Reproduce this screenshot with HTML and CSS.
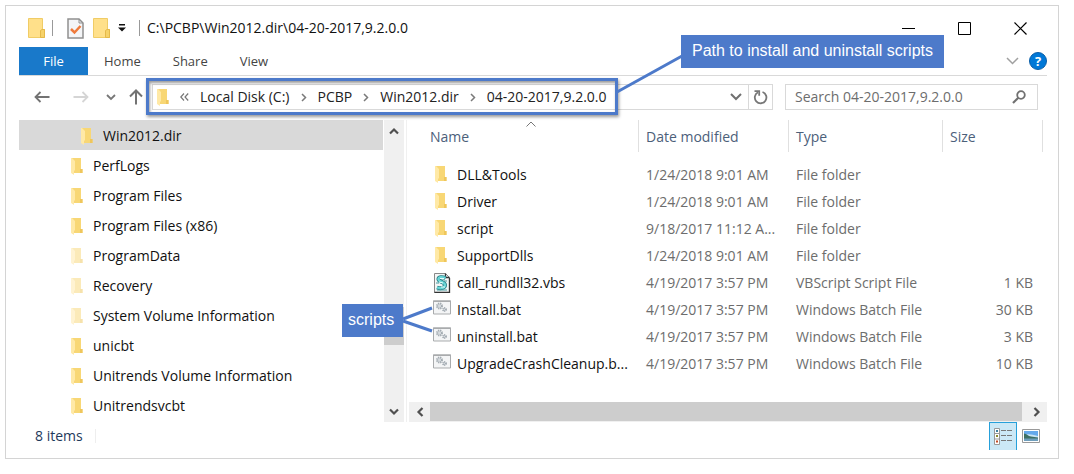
FILE: index.html
```html
<!DOCTYPE html>
<html lang="en">
<head>
  <meta charset="UTF-8">
  <meta name="viewport" content="width=device-width, initial-scale=1">
  <title>C:\PCBP\Win2012.dir\04-20-2017,9.2.0.0</title>
  <link rel="stylesheet" href="styles.css">
</head>
<body>

<!-- Shared icons -->
<svg class="sprite" aria-hidden="true">
  <symbol id="folder" viewBox="0 0 12 17">
    <path d="M1 0h9v11h1.500v4H1z" fill="#f8d775"/>
    <path d="M9 11h2.500v4H9z" fill="#efc65c"/>
    <path d="M0 0h1l3 3v9l-1 1v4l-3-2z" fill="#ffe9a6"/>
  </symbol>
  <symbol id="folder-big" viewBox="0 0 18 21">
    <path d="M.5.500h14v11h2v8H.5z" fill="#ffe08a" stroke="#f0cc66"/>
    <path d="M12.500 19.500v-7l1.500-1h2.500v8z" fill="#f6d269" stroke="#e5b94a"/>
  </symbol>
  <symbol id="chevron" viewBox="0 0 6 9">
    <path d="M1 1l3.500 3.500L1 8" fill="none" stroke="#7a7a7a" stroke-width="1.500"/>
  </symbol>
  <symbol id="batch" viewBox="0 0 18 15">
    <path d="M.5 1h17v13H.5z" fill="#f4f5f6" stroke="#a9abad"/>
    <path d="M0 .5h18v1.500H0z" fill="#a9abad"/>
    <circle cx="6.500" cy="6" r="2.500" fill="#d5dade" stroke="#a3abb1" stroke-width="2" stroke-dasharray="1.200 .8"/>
    <circle cx="11.500" cy="9.500" r="1.600" fill="#d5dade" stroke="#969fa7" stroke-width="1.500" stroke-dasharray="1 .6"/>
  </symbol>
</svg>

<main class="window">

  <header class="titlebar">
    <svg class="icon-big" aria-hidden="true"><use href="#folder-big"/></svg>
    <span class="sep sep-first"></span>
    <button class="plain" aria-label="Properties">
      <svg width="18" height="21" viewBox="0 0 18 21">
        <path d="M1 1h11l4 4v15H1z" fill="#f4f5f7" stroke="#909090" stroke-width="1.500"/>
        <path d="M12 1v4h4" fill="none" stroke="#909090"/>
        <path d="M4 11l3.500 3.500L13.500 8" fill="none" stroke="#ee7a3c" stroke-width="2.500"/>
      </svg>
    </button>
    <button class="plain new-folder" aria-label="New folder"><svg class="icon-big"><use href="#folder-big"/></svg></button>
    <button class="plain customize" aria-label="Customize Quick Access Toolbar">
      <svg width="8" height="8" viewBox="0 0 8 8"><path d="M1 0h6v1.500H1zM0 3.500h8L4 7.500z" fill="#111"/></svg>
    </button>
    <span class="sep sep-last"></span>
    <h1 class="title">C:\PCBP\Win2012.dir\04-20-2017,9.2.0.0</h1>
    <div class="controls">
      <button class="plain" aria-label="Minimize"><svg width="13" height="13"><path d="M0 6.500h13" stroke="#000"/></svg></button>
      <button class="plain" aria-label="Maximize"><svg width="13" height="13"><path d="M.5.500h12v12H.5z" fill="none" stroke="#000"/></svg></button>
      <button class="plain" aria-label="Close"><svg width="13" height="13"><path d="M.5.500l12 12M12.500.500l-12 12" stroke="#000" stroke-width="1.200"/></svg></button>
    </div>
  </header>

  <div class="ribbon">
    <button class="tab tab-file">File</button>
    <button class="tab">Home</button>
    <button class="tab">Share</button>
    <button class="tab">View</button>
    <div class="ribbon-end">
      <button class="plain" aria-label="Expand the Ribbon"><svg width="13" height="8"><path d="M1 1l5.500 5.500L12 1" fill="none" stroke="#a0a0a0" stroke-width="1.500"/></svg></button>
      <button class="help" aria-label="Help">?</button>
    </div>
  </div>

  <div class="addressbar">
    <div class="arrows">
      <button class="plain" aria-label="Back"><svg width="16" height="12"><path d="M15.500 6H1.500M6.500 1l-5 5 5 5" fill="none" stroke="#737373" stroke-width="1.800"/></svg></button>
      <button class="plain forward" aria-label="Forward"><svg width="16" height="12"><path d="M.5 6h14M9.500 1l5 5-5 5" fill="none" stroke="#d5d5d5" stroke-width="1.800"/></svg></button>
      <button class="plain recent" aria-label="Recent locations"><svg width="10" height="7"><path d="M1 1l4 4 4-4" fill="none" stroke="#777" stroke-width="1.800"/></svg></button>
      <button class="plain" aria-label="Up"><svg width="14" height="16"><path d="M7 15.500V1.500M1 7.500l6-6 6 6" fill="none" stroke="#737373" stroke-width="2"/></svg></button>
    </div>
    <div class="address">
      <nav class="crumbs" aria-label="Address">
        <svg class="icon-folder" aria-hidden="true"><use href="#folder"/></svg>
        <svg class="more" width="9" height="8" aria-hidden="true"><path d="M4 .5L.8 4 4 7.500M8.200.500L5 4l3.200 3.500" fill="none" stroke="#777" stroke-width="1.200"/></svg>
        <a href="#c">Local Disk (C:)</a>
        <svg class="chev" aria-hidden="true"><use href="#chevron"/></svg>
        <a href="#pcbp">PCBP</a>
        <svg class="chev" aria-hidden="true"><use href="#chevron"/></svg>
        <a href="#win2012">Win2012.dir</a>
        <svg class="chev" aria-hidden="true"><use href="#chevron"/></svg>
        <a href="#current">04-20-2017,9.2.0.0</a>
      </nav>
      <button class="plain history" aria-label="Previous locations"><svg width="12" height="8"><path d="M1 1l5 5 5-5" fill="none" stroke="#707070" stroke-width="2"/></svg></button>
      <button class="plain refresh" aria-label="Refresh">
        <svg width="15" height="15" viewBox="0 0 15 15"><path d="M9.500 2a5.800 5.800 0 1 1-4.500.300" fill="none" stroke="#777" stroke-width="1.800"/><path d="M1.500 1.200h4.700v4.500" fill="none" stroke="#777" stroke-width="1.800"/></svg>
      </button>
    </div>
    <div class="search">
      <input type="text" aria-label="Search 04-20-2017,9.2.0.0" placeholder="Search 04-20-2017,9.2.0.0">
      <svg width="14" height="14" aria-hidden="true"><circle cx="9" cy="5" r="3.800" fill="none" stroke="#707070" stroke-width="1.800"/><path d="M6.300 7.700L1 13" stroke="#707070" stroke-width="2.200"/></svg>
    </div>
  </div>

  <div class="panes">
    <ul class="tree">
      <li><a class="selected" href="#win2012"><svg class="icon-folder"><use href="#folder"/></svg>Win2012.dir</a></li>
      <li><a href="#perflogs"><svg class="icon-folder"><use href="#folder"/></svg>PerfLogs</a></li>
      <li><a href="#program-files"><svg class="icon-folder"><use href="#folder"/></svg>Program Files</a></li>
      <li><a href="#program-files-x86"><svg class="icon-folder"><use href="#folder"/></svg>Program Files (x86)</a></li>
      <li><a class="hidden-item" href="#programdata"><svg class="icon-folder"><use href="#folder"/></svg>ProgramData</a></li>
      <li><a class="hidden-item" href="#recovery"><svg class="icon-folder"><use href="#folder"/></svg>Recovery</a></li>
      <li><a class="hidden-item" href="#svi"><svg class="icon-folder"><use href="#folder"/></svg>System Volume Information</a></li>
      <li><a href="#unicbt"><svg class="icon-folder"><use href="#folder"/></svg>unicbt</a></li>
      <li><a href="#uvi"><svg class="icon-folder"><use href="#folder"/></svg>Unitrends Volume Information</a></li>
      <li><a href="#unitrendsvcbt"><svg class="icon-folder"><use href="#folder"/></svg>Unitrendsvcbt</a></li>
    </ul>

    <div class="vscroll">
      <button class="plain" aria-label="Scroll up"><svg width="10" height="8"><path d="M1 6.500l4-4 4 4" fill="none" stroke="#505050" stroke-width="2.200"/></svg></button>
      <div class="vthumb"></div>
      <button class="plain" aria-label="Scroll down"><svg width="10" height="8"><path d="M1 1.500l4 4 4-4" fill="none" stroke="#505050" stroke-width="2.200"/></svg></button>
    </div>

    <div class="details">
      <table>
        <colgroup>
          <col>
          <col class="col-date">
          <col class="col-type">
          <col class="col-size">
        </colgroup>
        <thead>
          <tr>
            <th aria-sort="ascending">Name<svg class="sort" width="10" height="6"><path d="M.5 5.500L5 1l4.500 4.500" fill="none" stroke="#777"/></svg></th>
            <th>Date modified</th>
            <th>Type</th>
            <th>Size</th>
          </tr>
        </thead>
        <tbody>
          <tr><td><div class="file"><svg class="icon-folder"><use href="#folder"/></svg>DLL&amp;Tools</div></td><td>1/24/2018 9:01 AM</td><td>File folder</td><td></td></tr>
          <tr><td><div class="file"><svg class="icon-folder"><use href="#folder"/></svg>Driver</div></td><td>1/24/2018 9:01 AM</td><td>File folder</td><td></td></tr>
          <tr><td><div class="file"><svg class="icon-folder"><use href="#folder"/></svg>script</div></td><td>9/18/2017 11:12 A...</td><td>File folder</td><td></td></tr>
          <tr><td><div class="file"><svg class="icon-folder"><use href="#folder"/></svg>SupportDlls</div></td><td>1/24/2018 9:01 AM</td><td>File folder</td><td></td></tr>
          <tr>
            <td><div class="file">
              <svg class="icon-file" viewBox="0 0 18 20">
                <path d="M1.500.500h11l4 4v15h-15z" fill="#f3f6f6" stroke="#888"/>
                <path d="M12.500.500v4h4M16.500 5v14.500h-15" fill="none" stroke="#333" stroke-width="1.300"/>
                <path d="M12.500 5C9 3.500 5 4 5.500 6.500s6.500 2.500 6.500 5.500-4 4-8 2.500" fill="none" stroke="#277f86" stroke-width="4"/>
                <path d="M12.500 5C9 3.500 5 4 5.500 6.500s6.500 2.500 6.500 5.500-4 4-8 2.500" fill="none" stroke="#69d5d6" stroke-width="2.400"/>
                <path d="M7 5.500h4M6 9l4 1M8 14h4" stroke="#e8ffff"/>
                <path d="M3 10h3M11 8h3M4 17h10" stroke="#4b9ba0"/>
              </svg>call_rundll32.vbs</div></td>
            <td>4/19/2017 3:57 PM</td><td>VBScript Script File</td><td>1 KB</td>
          </tr>
          <tr><td><div class="file"><svg class="icon-batch"><use href="#batch"/></svg>Install.bat</div></td><td>4/19/2017 3:57 PM</td><td>Windows Batch File</td><td>30 KB</td></tr>
          <tr><td><div class="file"><svg class="icon-batch"><use href="#batch"/></svg>uninstall.bat</div></td><td>4/19/2017 3:57 PM</td><td>Windows Batch File</td><td>3 KB</td></tr>
          <tr><td><div class="file"><svg class="icon-batch"><use href="#batch"/></svg>UpgradeCrashCleanup.b...</div></td><td>4/19/2017 3:57 PM</td><td>Windows Batch File</td><td>10 KB</td></tr>
        </tbody>
      </table>
      <div class="hscroll">
        <button class="plain" aria-label="Scroll left"><svg width="8" height="10"><path d="M6.500 1l-4 4 4 4" fill="none" stroke="#505050" stroke-width="2.200"/></svg></button>
        <div class="hthumb"></div>
        <button class="plain" aria-label="Scroll right"><svg width="8" height="10"><path d="M1.500 1l4 4-4 4" fill="none" stroke="#505050" stroke-width="2.200"/></svg></button>
      </div>
    </div>
  </div>

  <footer class="statusbar">
    <span class="count">8 items</span>
    <div class="views">
      <button class="plain view-details" aria-label="Details view">
        <svg width="18" height="17" viewBox="0 0 18 17">
          <path d="M.5.500h5v16h-5zM.5 5.500h5M.5 11h5" fill="#fff" stroke="#999"/>
          <path d="M2 2h2v2H2z" fill="#3f7f9f"/><path d="M2 7h2v2H2z" fill="#8b8b2d"/><path d="M2 12.500h2v2H2z" fill="#c44a24"/>
          <path d="M7 2.500h5M13 2.500h5M7 7.500h5M13 7.500h5M7 12.500h5M13 12.500h5" stroke="#777"/>
        </svg>
      </button>
      <button class="plain" aria-label="Large icons view">
        <svg width="18" height="14" viewBox="0 0 18 14">
          <path d="M.5.500h17v13H.5z" fill="#fff" stroke="#999"/>
          <path d="M2 2h14v5H2z" fill="#65a9ec"/><path d="M2 6q5-2 14 1v3H2z" fill="#c9e4f5"/>
          <path d="M2 4.500c3 .5 4 2.500 7 3l7 1V10H2z" fill="#3d6f64"/><path d="M2 9.500h14V12H2z" fill="#6e9ebc"/>
        </svg>
      </button>
    </div>
  </footer>

  <!-- Callouts -->
  <svg class="lines" aria-hidden="true">
    <path d="M611 86l65-36M397 313l29-11M397 315l29 10" stroke="#4d7aca" stroke-width="3"/>
  </svg>
  <div class="callout callout-path">Path to install and uninstall scripts</div>
  <div class="callout callout-scripts">scripts</div>
</main>

</body>
</html>
```
FILE: styles.css
```css
* {
  box-sizing: border-box;
}
body {
  margin: 0;
  padding: 5px 15px 14px 5px;
  background: #fff;
  font-family: "Open Sans", "Noto Sans", sans-serif;
  font-size: 14px;
  line-height: 20px;
  color: #111;
}
a {
  color: inherit;
  text-decoration: none;
}
svg {
  display: block;
  flex-shrink: 0;
}
button {
  font: inherit;
  border: none;
  cursor: pointer;
}
.plain {
  display: flex;
  align-items: center;
  justify-content: center;
  padding: 0;
  background: none;
}
.sprite {
  position: absolute;
  width: 0;
  height: 0;
}
.icon-folder {
  width: 12px;
  height: 17px;
}
.icon-big {
  width: 18px;
  height: 21px;
}
.window {
  position: relative;
  border: 1px solid #d4d4d4;
  padding: 7px 11px 8px 13px;
}

/* Title bar */
.titlebar {
  display: flex;
  align-items: center;
  height: 34px;
  padding: 0 20px 4px 9px;
}
.sep {
  width: 1px;
  height: 16px;
  background: #999;
}
.sep-first {
  margin: 0 14px 0 6px;
}
.sep-last {
  margin: 0 7px 0 13px;
}
.new-folder {
  margin: 0 7px 0 8px;
}
.title {
  margin: 0;
  font-size: 14px;
  font-weight: normal;
}
.controls {
  display: flex;
  gap: 43px;
  margin-left: auto;
}

/* Ribbon */
.ribbon {
  display: flex;
  height: 29px;
  border-bottom: 1px solid #d9d9d9;
}
.tab {
  padding: 0 16px;
  background: none;
  font-size: 13px;
  color: #444;
}
.tab-file {
  width: 69px;
  background: #1979ca;
  color: #fff;
}
.ribbon-end {
  display: flex;
  align-items: center;
  gap: 10px;
  margin-left: auto;
}
.help {
  width: 18px;
  height: 18px;
  padding: 0;
  border: 1px solid #0a5ea8;
  border-radius: 50%;
  background: #0078d7;
  color: #fff;
  font-size: 13px;
  font-weight: bold;
  line-height: 16px;
}

/* Address bar */
.addressbar {
  display: flex;
  align-items: center;
  height: 44px;
  padding: 0 9px 2px 0;
}
.arrows {
  display: flex;
  align-items: center;
  width: 133px;
  padding-left: 15px;
}
.forward {
  margin: 0 17px 0 23px;
}
.recent {
  margin-right: 13px;
}
.address {
  display: flex;
  flex: 1;
  height: 26px;
  border: 1px solid #d9d9d9;
}
.crumbs {
  position: relative;
  display: flex;
  align-items: center;
  gap: 11px;
  padding: 0 4px 0 4px;
  color: #222;
}
/* highlight round the path */
.crumbs::after {
  content: "";
  position: absolute;
  inset: -7px -7px -6px;
  border: 3px solid #4d7aca;
  box-shadow: 1px 2px 3px rgba(0, 0, 0, 0.4), inset 1px 2px 3px rgba(0, 0, 0, 0.4);
  pointer-events: none;
}
.chev {
  width: 6px;
  height: 9px;
}
.history {
  width: 24px;
  margin-left: auto;
}
.refresh {
  width: 24px;
  border-left: 1px solid #d9d9d9;
}
.search {
  display: flex;
  align-items: center;
  width: 253px;
  height: 26px;
  margin-left: 12px;
  padding: 0 11px 0 9px;
  border: 1px solid #d9d9d9;
}
.search input {
  flex: 1;
  min-width: 0;
  padding: 0;
  border: none;
  outline: none;
  background: none;
  font: inherit;
}
.search input::placeholder {
  color: #6d6d6d;
}

/* Panes */
.panes {
  display: grid;
  grid-template-columns: 364px 23px 1fr;
}
.tree {
  margin: 0;
  padding: 0;
  list-style: none;
}
.tree a {
  display: flex;
  align-items: center;
  gap: 10px;
  height: 30px;
  padding: 2px 0 0 52px;
}
.tree .selected {
  padding-left: 62px;
  background: #d9d9d9;
}
.hidden-item svg {
  opacity: 0.5;
}
.vscroll {
  display: flex;
  flex-direction: column;
  width: 20px;
  margin-left: 1px;
  background: #f0f0f0;
}
.vscroll button {
  height: 21px;
}
.vthumb {
  height: 38px;
  margin: 166px 0 auto;
  background: #cdcdcd;
}
.details {
  display: flex;
  flex-direction: column;
  min-width: 0;
  border-left: 1px solid #f0f0f0;
}
table {
  width: 100%;
  padding-right: 4px;
  border-spacing: 0;
  table-layout: fixed;
}
.col-date {
  width: 150px;
}
.col-type {
  width: 154px;
}
.col-size {
  width: 100px;
}
th {
  position: relative;
  height: 32px;
  padding: 2px 7px 0;
  border-right: 1px solid #e0e0e0;
  color: #4c607a;
  font-weight: normal;
  text-align: left;
}
th:first-child {
  padding-left: 23px;
}
.sort {
  position: absolute;
  top: 1px;
  left: 119px;
}
tbody::before {
  content: "";
  display: block;
  height: 9px;
}
td {
  height: 27px;
  padding: 0 7px;
  color: #6d6d6d;
  white-space: nowrap;
}
td:first-child {
  padding: 0 0 0 26px;
  color: #111;
}
td:last-child {
  padding-right: 10px;
  text-align: right;
}
.file {
  display: flex;
  align-items: center;
  gap: 6px;
}
.file .icon-folder {
  margin: 0 4px 0 2px;
}
.icon-file {
  width: 18px;
  height: 20px;
}
.icon-batch {
  width: 18px;
  height: 15px;
  margin-bottom: 4px;
}
.hscroll {
  display: flex;
  height: 20px;
  margin: 25px 0 0 2px;
  background: #f0f0f0;
}
.hscroll button {
  width: 21px;
}
.hthumb {
  flex: 1;
  margin: 0 4px 1px 0;
  background: #cdcdcd;
}

/* Status bar */
.statusbar {
  display: flex;
  align-items: center;
  justify-content: space-between;
  height: 28px;
  padding: 0 7px 0 16px;
}
.count {
  padding-right: 12px;
  border-right: 1px solid #eee;
  color: #1e395b;
  line-height: 14px;
}
.views {
  display: flex;
  align-items: center;
  gap: 5px;
}
.view-details {
  width: 28px;
  height: 28px;
  border: 1px solid #26a0da;
  border-bottom: none;
  background: #cbe8f6;
}

/* Callouts */
.lines {
  position: absolute;
  top: 0;
  left: 0;
  width: 100%;
  height: 100%;
  pointer-events: none;
}
.callout {
  position: absolute;
  background: #4d7aca;
  color: #fff;
  font-family: "Liberation Sans", Arial, sans-serif;
  font-size: 16px;
  line-height: 31px;
  height: 33px;
  white-space: nowrap;
}
.callout-path {
  top: 29px;
  left: 675px;
  width: 263px;
  padding-left: 11px;
}
.callout-scripts {
  top: 298px;
  left: 336px;
  width: 61px;
  padding-left: 6px;
}
```
